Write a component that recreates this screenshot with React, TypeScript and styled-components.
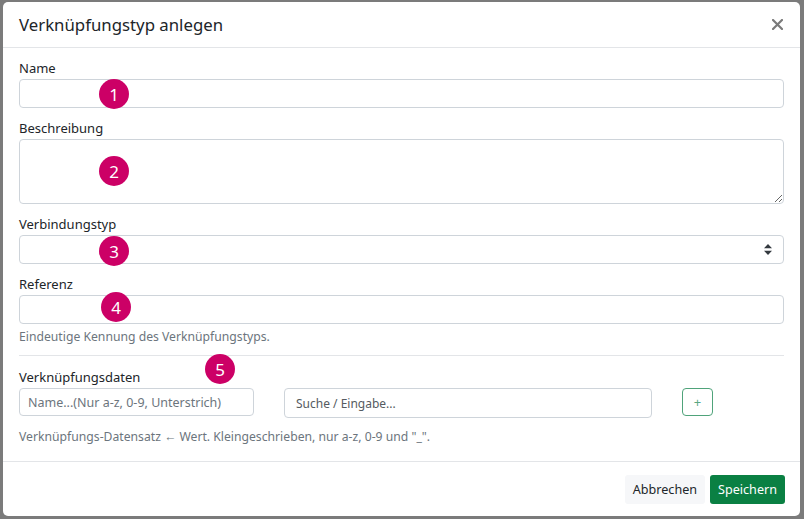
import React from "react";
import styled, { createGlobalStyle } from "styled-components";

const GlobalStyle = createGlobalStyle`
  html, body {
    margin: 0;
    padding: 0;
    background: #7b7b7b;
  }
  * {
    box-sizing: border-box;
  }
`;

/* ===================== STYLES ===================== */

const Backdrop = styled.div`
  width: 804px;
  height: 519px;
  padding: 2px 4px 3px 3px;
  background: #7b7b7b;
  font-family: "Noto Sans", "Open Sans", sans-serif;
  color: #212529;
`;

const Modal = styled.div`
  position: relative;
  width: 797px;
  height: 514px;
  background: #fff;
  border-radius: 5px;
  display: flex;
  flex-direction: column;
  overflow: hidden;
`;

const Header = styled.div`
  height: 46px;
  display: flex;
  align-items: center;
  justify-content: space-between;
  padding: 0 16px;
  border-bottom: 1px solid #e3e5e8;
`;

const Title = styled.h5`
  margin: 0;
  font-size: 16.8px;
  font-weight: 400;
  line-height: 24px;
`;

const CloseButton = styled.button`
  display: flex;
  align-items: center;
  justify-content: center;
  width: 20px;
  height: 20px;
  padding: 0;
  margin-right: -3px;
  border: none;
  background: none;
  color: #7a7a7a;
  cursor: pointer;
`;

const Body = styled.div`
  flex: 1;
  padding: 10px 16px 0 16px;
  display: flex;
  flex-direction: column;
`;

const Group = styled.div<{ $gap?: number }>`
  display: flex;
  flex-direction: column;
  margin-bottom: ${({ $gap }) => $gap ?? 10}px;
`;

const Label = styled.label`
  font-size: 13px;
  line-height: 20px;
  margin-bottom: 1px;
`;

const Input = styled.input`
  width: 100%;
  height: 29px;
  padding: 0 9px;
  border: 1px solid #ced4da;
  border-radius: 4px;
  font-family: inherit;
  font-size: 13px;
  color: #495057;
  background: #fff;
  outline: none;

  &::placeholder {
    color: #6c757d;
  }
`;

const TextArea = styled.textarea`
  width: 100%;
  height: 65px;
  padding: 6px 9px;
  border: 1px solid #ced4da;
  border-radius: 4px;
  font-family: inherit;
  font-size: 13px;
  outline: none;
  resize: vertical;
`;

const SelectWrap = styled.div`
  position: relative;
`;

const Select = styled.select`
  width: 100%;
  height: 29px;
  padding: 0 9px;
  border: 1px solid #ced4da;
  border-radius: 4px;
  background: #fff;
  font-family: inherit;
  font-size: 13px;
  appearance: none;
  outline: none;
`;

const SelectArrow = styled.svg`
  position: absolute;
  right: 12px;
  top: 9px;
  pointer-events: none;
`;

const Help = styled.div<{ $top?: number }>`
  margin-top: ${({ $top }) => $top ?? 4}px;
  font-size: 12.2px;
  line-height: 18px;
  color: #6c757d;
`;

const Divider = styled.hr`
  margin: 9px 0 11px 0;
  border: none;
  border-top: 1px solid #e3e5e8;
`;

const DataRow = styled.div`
  display: flex;
  align-items: flex-start;
  gap: 30px;
`;

const DataInput = styled(Input)<{ $width: number; $small?: boolean }>`
  width: ${({ $width }) => $width}px;
  height: ${({ $small }) => ($small ? 30 : 28)}px;
  font-size: ${({ $small }) => ($small ? 12 : 12.5)}px;
  padding: 0 ${({ $small }) => ($small ? 11 : 8)}px;

  &::placeholder {
    color: ${({ $small }) => ($small ? "#555b61" : "#6c757d")};
  }
`;

const AddButton = styled.button`
  width: 31px;
  height: 28px;
  border: 1px solid #4fa37a;
  border-radius: 4px;
  background: #fff;
  color: #5aa883;
  font-family: inherit;
  font-size: 13px;
  line-height: 1;
  padding: 0;
  cursor: pointer;
`;

const Footer = styled.div`
  height: 55px;
  display: flex;
  align-items: center;
  justify-content: flex-end;
  gap: 5px;
  padding: 0 15px;
  border-top: 1px solid #e3e5e8;
`;

const FooterButton = styled.button<{ $primary?: boolean }>`
  height: 29px;
  padding: 0 8px;
  border: none;
  border-radius: 3px;
  font-family: inherit;
  font-size: 12.6px;
  background: ${({ $primary }) => ($primary ? "#0a8043" : "#f6f7f9")};
  color: ${({ $primary }) => ($primary ? "#fff" : "#212529")};
  cursor: pointer;
`;

const Badge = styled.span<{ $x: number; $y: number }>`
  position: absolute;
  left: ${({ $x }) => $x - 15}px;
  top: ${({ $y }) => $y - 15}px;
  width: 30px;
  height: 30px;
  border-radius: 50%;
  background: #cc0066;
  color: #fff;
  display: flex;
  align-items: center;
  justify-content: center;
  font-size: 17px;
  line-height: 1;
`;

/* ===================== COMPONENT ===================== */

const badges = [
  { n: 1, x: 111, y: 92 },
  { n: 2, x: 111, y: 169 },
  { n: 3, x: 111, y: 249 },
  { n: 4, x: 113, y: 305 },
  { n: 5, x: 217, y: 367 },
];

const App: React.FC = () => {
  return (
    <Backdrop>
      <GlobalStyle />
      <Modal>
        <Header>
          <Title>Verknüpfungstyp anlegen</Title>
          <CloseButton aria-label="Schließen">
            <svg width="11" height="11" viewBox="0 0 11 11">
              <path
                d="M1 1 L10 10 M10 1 L1 10"
                stroke="currentColor"
                strokeWidth="2.2"
                strokeLinecap="round"
              />
            </svg>
          </CloseButton>
        </Header>

        <Body>
          <Group>
            <Label>Name</Label>
            <Input />
          </Group>

          <Group>
            <Label>Beschreibung</Label>
            <TextArea />
          </Group>

          <Group>
            <Label>Verbindungstyp</Label>
            <SelectWrap>
              <Select defaultValue="">
                <option value=""></option>
              </Select>
              <SelectArrow width="8" height="11" viewBox="0 0 8 11">
                <path d="M4 0 L8 4.3 H0 Z M4 11 L8 6.7 H0 Z" fill="#343a40" />
              </SelectArrow>
            </SelectWrap>
          </Group>

          <Group $gap={0}>
            <Label>Referenz</Label>
            <Input />
            <Help>Eindeutige Kennung des Verknüpfungstyps.</Help>
          </Group>

          <Divider />

          <Group $gap={0}>
            <Label>Verknüpfungsdaten</Label>
            <DataRow>
              <DataInput $width={235} placeholder="Name...(Nur a-z, 0-9, Unterstrich)" />
              <DataInput $width={368} $small placeholder="Suche / Eingabe..." />
              <AddButton>+</AddButton>
            </DataRow>
            <Help $top={10}>
              Verknüpfungs-Datensatz ← Wert. Kleingeschrieben, nur a-z, 0-9 und "_".
            </Help>
          </Group>
        </Body>

        <Footer>
          <FooterButton>Abbrechen</FooterButton>
          <FooterButton $primary>Speichern</FooterButton>
        </Footer>

        {badges.map((b) => (
          <Badge key={b.n} $x={b.x} $y={b.y}>
            {b.n}
          </Badge>
        ))}
      </Modal>
    </Backdrop>
  );
};

export default App;
